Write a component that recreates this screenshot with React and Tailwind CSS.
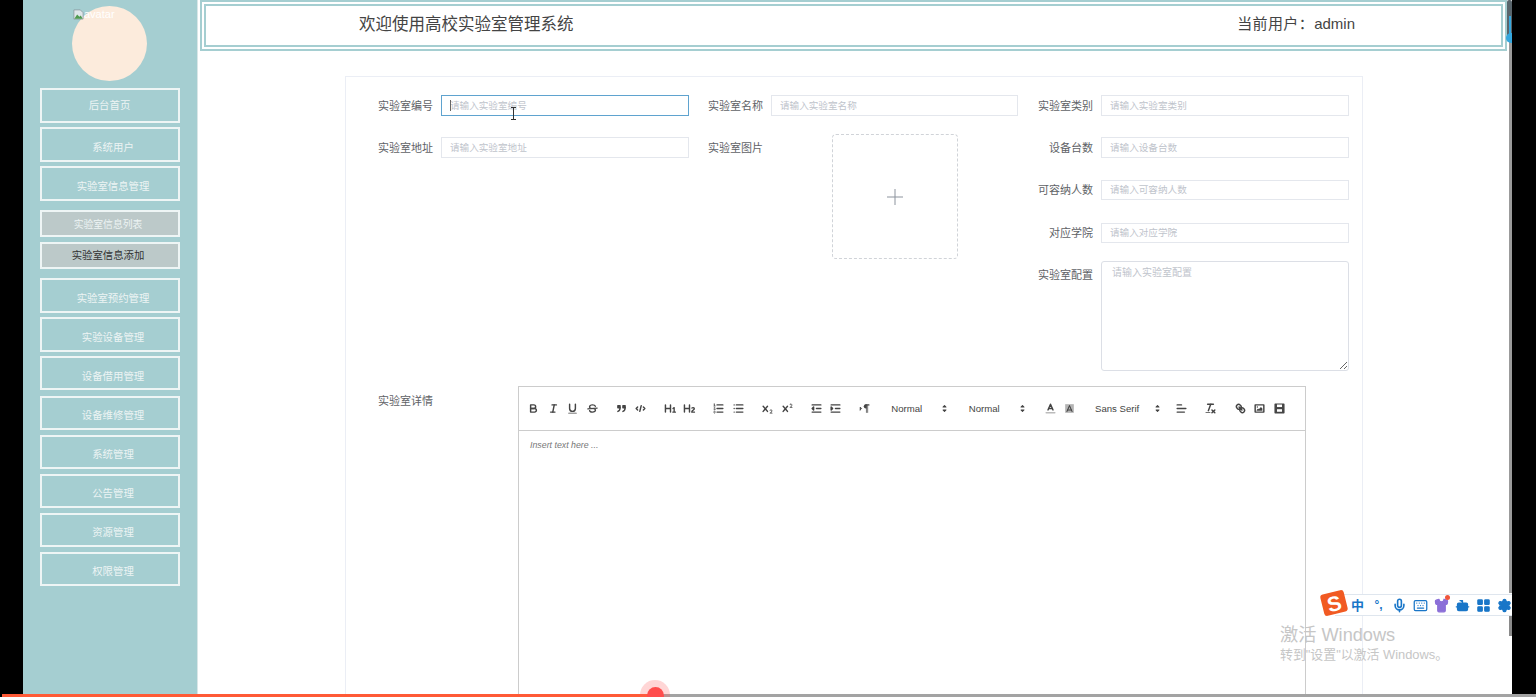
import { Mic, Keyboard, Shirt, Bot, LayoutGrid, Settings } from 'lucide-react'

const NAV_TOP = [
  { label: '后台首页', mt: 'mt-0', box: 'h-[35px]', text: 'pr-[1px] pt-[1px]' },
  { label: '系统用户', mt: 'mt-[4px]', box: 'h-[35px]', text: 'pl-[6px] pt-[7px]' },
  { label: '实验室信息管理', mt: 'mt-[4px]', box: 'h-[35px]', text: 'pl-[6px] pt-[7px]' },
]

const NAV_BOTTOM = [
  { label: '实验室预约管理', mt: 'mt-[9px]', box: 'h-[35px]', text: 'pl-[6px] pt-[7px]' },
  { label: '实验设备管理', mt: 'mt-[4px]', box: 'h-[35px]', text: 'pl-[6px] pt-[7px]' },
  { label: '设备借用管理', mt: 'mt-[4px]', box: 'h-[34px]', text: 'pl-[6px] pt-[7px]' },
  { label: '设备维修管理', mt: 'mt-[6px]', box: 'h-[34px]' },
  { label: '系统管理', mt: 'mt-[5px]', box: 'h-[34px]' },
  { label: '公告管理', mt: 'mt-[5px]', box: 'h-[34px]' },
  { label: '资源管理', mt: 'mt-[5px]', box: 'h-[34px]' },
  { label: '权限管理', mt: 'mt-[5px]', box: 'h-[34px]', text: 'pl-[6px] pt-[6px]' },
]

function NavItem({ label, mt, box, text = 'pl-[6px] pt-[5px]' }) {
  return (
    <div className={`${mt} ${box} w-[140px] border-2 border-[#eef5f5] flex items-center justify-center text-[10.4px] leading-[14px] text-[#edf4f4] ${text}`}>
      {label}
    </div>
  )
}

function Field({ label, placeholder, className = '', h = 'h-[21px]', focused = false }) {
  return (
    <div className={`flex items-center gap-[8px] ${className}`}>
      <label className="w-[55px] shrink-0 text-right text-[11px] leading-[14px] text-[#606266] whitespace-nowrap">{label}</label>
      <div className={`relative flex-1 ${h}`}>
        <input
          placeholder={placeholder}
          className={`block h-full w-full border ${focused ? 'border-[#5fa3cf]' : 'border-[#e4e7ed]'} pl-[8px] pb-[1px] text-[9.6px] leading-[14px] placeholder:text-[#c0c4cc] outline-none`}
        />
        {focused && <div className="absolute left-[9px] top-[5px] h-[11px] w-px bg-[#666]" />}
      </div>
    </div>
  )
}

function Ico({ children }) {
  return (
    <svg viewBox="0 0 18 18" className="w-[13px] h-[13px]" fill="none" stroke="#444" strokeWidth="2" strokeLinecap="round" strokeLinejoin="round">
      {children}
    </svg>
  )
}

function Btn({ children }) {
  return <div className="w-[19.5px] h-[20px] flex items-center justify-center shrink-0"><Ico>{children}</Ico></div>
}

function Picker({ label, w, arrow, pad }) {
  return (
    <div className={`${w} ${pad} h-[20px] flex items-center shrink-0 relative text-[9.6px] leading-[14px] text-[#444]`}>
      {label}
      <svg viewBox="0 0 18 18" className={`absolute ${arrow} top-[3.5px] w-[13px] h-[13px]`} fill="#444" stroke="#444" strokeWidth="1.5" strokeLinejoin="round">
        <polygon points="7 11 9 13 11 11 7 11" />
        <polygon points="7 7 9 5 11 7 7 7" />
      </svg>
    </div>
  )
}

function Toolbar() {
  const fill = { fill: '#444', stroke: 'none' }
  const thin = { strokeWidth: 1 }
  return (
    <div className="h-[44px] border-b border-[#ccc] flex items-center pl-[5px] gap-[9.7px]">
      <div className="flex">
        <Btn>
          <path d="M5,4H9.5A2.5,2.5,0,0,1,12,6.5v0A2.5,2.5,0,0,1,9.5,9H5A0,0,0,0,1,5,9V4A0,0,0,0,1,5,4Z" />
          <path d="M5,9h5.5A2.5,2.5,0,0,1,13,11.5v0A2.5,2.5,0,0,1,10.5,14H5a0,0,0,0,1,0,0V9A0,0,0,0,1,5,9Z" />
        </Btn>
        <Btn>
          <line x1="7" x2="13" y1="4" y2="4" />
          <line x1="5" x2="11" y1="14" y2="14" />
          <line x1="8" x2="10" y1="14" y2="4" />
        </Btn>
        <Btn>
          <path d="M5,3V9a4.012,4.012,0,0,0,4,4H9a4.012,4.012,0,0,0,4-4V3" />
          <rect {...fill} height="1" rx="0.5" ry="0.5" width="12" x="3" y="15" />
        </Btn>
        <Btn>
          <line x1="15.5" x2="2.5" y1="8.5" y2="9.5" strokeWidth="1.5" />
          <path {...fill} d="M9.007,8C6.542,7.791,6,7.519,6,6.5,6,5.792,7.283,5,9,5c1.571,0,2.765.679,2.969,1.309a1,1,0,0,0,1.9-.617C13.356,4.106,11.354,3,9,3,6.2,3,4,4.538,4,6.5a3.2,3.2,0,0,0,.5,1.843Z" />
          <path {...fill} d="M8.984,10C11.457,10.208,12,10.479,12,11.5c0,.708-1.283,1.5-3,1.5-1.571,0-2.765-.679-2.969-1.309a1,1,0,1,0-1.9.617C4.644,13.894,6.646,15,9,15c2.8,0,5-1.538,5-3.5a3.2,3.2,0,0,0-.5-1.843Z" />
        </Btn>
      </div>
      <div className="flex">
        <Btn>
          <rect fill="#444" height="3" width="3" x="4" y="5" />
          <rect fill="#444" height="3" width="3" x="11" y="5" />
          <path d="M7,8c0,4.031-3,5-3,5" />
          <path d="M14,8c0,4.031-3,5-3,5" />
        </Btn>
        <Btn>
          <polyline points="5 7 3 9 5 11" />
          <polyline points="13 7 15 9 13 11" />
          <line x1="10" x2="8" y1="5" y2="13" />
        </Btn>
      </div>
      <div className="flex">
        <Btn>
          <path {...fill} d="M10,4V14a1,1,0,0,1-2,0V10H3v4a1,1,0,0,1-2,0V4A1,1,0,0,1,3,4V8H8V4a1,1,0,0,1,2,0Zm6.06787,9.209H14.98975V7.59863a.54085.54085,0,0,0-.605-.60547h-.62744a1.01119,1.01119,0,0,0-.748.29688L11.645,8.56641a.5435.5435,0,0,0-.022.8584l.28613.30762a.53861.53861,0,0,0,.84717.0332l.09912-.08789a1.2137,1.2137,0,0,0,.2417-.35254h.02246s-.01123.30859-.01123.60547V13.209H12.041a.54085.54085,0,0,0-.605.60547v.43945a.54085.54085,0,0,0,.605.60547h4.02686a.54085.54085,0,0,0,.605-.60547v-.43945A.54085.54085,0,0,0,16.06787,13.209Z" />
        </Btn>
        <Btn>
          <path {...fill} d="M16.73975,13.81445v.43945a.54085.54085,0,0,1-.605.60547H11.855a.58392.58392,0,0,1-.64893-.60547V14.0127c0-2.90527,3.39941-3.42187,3.39941-4.55469a.77675.77675,0,0,0-.84717-.78125,1.17684,1.17684,0,0,0-.83594.38477c-.2749.26367-.561.374-.85791.13184l-.4292-.34082c-.30811-.24219-.38525-.51758-.1543-.81445a2.97155,2.97155,0,0,1,2.45361-1.17676,2.45393,2.45393,0,0,1,2.68408,2.40918c0,2.45312-3.1792,2.92676-3.27832,3.93848h2.79443A.54085.54085,0,0,1,16.73975,13.81445ZM9,3A.99974.99974,0,0,0,8,4V8H3V4A1,1,0,0,0,1,4V14a1,1,0,0,0,2,0V10H8v4a1,1,0,0,0,2,0V4A.99974.99974,0,0,0,9,3Z" />
        </Btn>
      </div>
      <div className="flex">
        <Btn>
          <line x1="7" x2="15" y1="4" y2="4" />
          <line x1="7" x2="15" y1="9" y2="9" />
          <line x1="7" x2="15" y1="14" y2="14" />
          <line {...thin} x1="2.5" x2="4.5" y1="5.5" y2="5.5" />
          <path {...fill} d="M3.5,6A0.5,0.5,0,0,1,3,5.5V3.085l-0.276.138A0.5,0.5,0,0,1,2.053,3c-0.124-.247-0.023-0.324.224-0.447l1-.5A0.5,0.5,0,0,1,4,2.5v3A0.5,0.5,0,0,1,3.5,6Z" />
          <path {...thin} d="M4.5,10.5h-2c0-.234,1.85-1.076,1.85-2.234A0.959,0.959,0,0,0,2.5,8.156" />
          <path {...thin} d="M2.5,14.846a0.959,0.959,0,0,0,1.85-.109A0.7,0.7,0,0,0,3.75,14a0.688,0.688,0,0,0,.6-0.736,0.959,0.959,0,0,0-1.85-.109" />
        </Btn>
        <Btn>
          <line x1="6" x2="15" y1="4" y2="4" />
          <line x1="6" x2="15" y1="9" y2="9" />
          <line x1="6" x2="15" y1="14" y2="14" />
          <line x1="3" x2="3" y1="4" y2="4" />
          <line x1="3" x2="3" y1="9" y2="9" />
          <line x1="3" x2="3" y1="14" y2="14" />
        </Btn>
      </div>
      <div className="flex">
        <Btn>
          <path {...fill} d="M15.5,15H13.861a3.858,3.858,0,0,0,1.914-2.975,1.8,1.8,0,0,0-1.6-1.751A1.921,1.921,0,0,0,12.021,11.7a0.50013,0.50013,0,1,0,.957.291h0a0.914,0.914,0,0,1,1.053-.725,0.81,0.81,0,0,1,.744.762c0,1.076-1.16971,1.86982-1.93971,2.43082A1.45639,1.45639,0,0,0,12,15.5a0.5,0.5,0,0,0,.5.5h3A0.5,0.5,0,0,0,15.5,15Z" />
          <path {...fill} d="M9.65,5.241a1,1,0,0,0-1.409.108L6,7.964,3.759,5.349A1,1,0,0,0,2.241,6.651L4.684,9.5,2.241,12.35A1,1,0,1,0,3.759,13.65L6,11.036,8.241,13.65a1,1,0,1,0,1.519-1.3L7.316,9.5,9.759,6.651A1,1,0,0,0,9.65,5.241Z" />
        </Btn>
        <Btn>
          <path {...fill} d="M15.5,7H13.861a4.015,4.015,0,0,0,1.914-2.975,1.8,1.8,0,0,0-1.6-1.751A1.922,1.922,0,0,0,12.021,3.7a0.5,0.5,0,1,0,.957.291,0.917,0.917,0,0,1,1.053-.725,0.81,0.81,0,0,1,.744.762c0,1.077-1.164,1.925-1.934,2.486A1.423,1.423,0,0,0,12,7.5a0.5,0.5,0,0,0,.5.5h3A0.5,0.5,0,0,0,15.5,7Z" />
          <path {...fill} d="M9.651,5.241a1,1,0,0,0-1.41.108L6,7.964,3.759,5.349A1,1,0,1,0,2.241,6.651L4.684,9.5,2.241,12.35A1,1,0,1,0,3.759,13.65L6,11.036,8.241,13.65a1,1,0,0,0,1.519-1.3L7.316,9.5,9.759,6.651A1,1,0,0,0,9.651,5.241Z" />
        </Btn>
      </div>
      <div className="flex">
        <Btn>
          <line x1="3" x2="15" y1="14" y2="14" />
          <line x1="3" x2="15" y1="4" y2="4" />
          <line x1="9" x2="15" y1="9" y2="9" />
          <polyline fill="#444" points="5 7 5 11 3 9 5 7" />
        </Btn>
        <Btn>
          <line x1="3" x2="15" y1="14" y2="14" />
          <line x1="3" x2="15" y1="4" y2="4" />
          <line x1="9" x2="15" y1="9" y2="9" />
          <polyline fill="#444" points="3 7 3 11 5 9 3 7" />
        </Btn>
      </div>
      <div className="flex">
        <Btn>
          <polygon fill="#444" strokeWidth="1" points="3 11 5 9 3 7 3 11" />
          <line x1="15" x2="11" y1="4" y2="4" />
          <path {...fill} d="M11,3a3,3,0,0,0,0,6h1V3H11Z" />
          <rect {...fill} height="11" width="1" x="11" y="4" />
          <rect {...fill} height="11" width="1" x="13" y="4" />
        </Btn>
      </div>
      <div className="flex">
        <Picker label="Normal" w="w-[78px]" pad="pl-[7px]" arrow="right-[11.5px]" />
        <Picker label="Normal" w="w-[78px]" pad="pl-[6.5px]" arrow="right-[11.5px]" />
        <Btn>
          <line stroke="#bbb" x1="3" x2="15" y1="15" y2="15" />
          <polyline points="5.5 11 9 3 12.5 11" />
          <line x1="11.63" x2="6.38" y1="9" y2="9" />
        </Btn>
        <Btn>
          <rect fill="#444" stroke="none" opacity="0.4" x="3" y="3" width="12" height="12" />
          <polyline strokeWidth="1.5" points="5.5 13 9 5 12.5 13" />
          <line strokeWidth="1.5" x1="11.63" x2="6.38" y1="11" y2="11" />
        </Btn>
      </div>
      <div className="flex">
        <Picker label="Sans Serif" w="w-[83px]" pad="pl-[6px]" arrow="right-[8.5px]" />
        <Btn>
          <line x1="3" x2="15" y1="9" y2="9" />
          <line x1="3" x2="13" y1="14" y2="14" />
          <line x1="3" x2="9" y1="4" y2="4" />
        </Btn>
      </div>
      <div className="flex">
        <Btn>
          <line x1="5" x2="13" y1="3" y2="3" />
          <line x1="6" x2="9.35" y1="12" y2="3" />
          <line x1="11" x2="15" y1="11" y2="15" />
          <line x1="15" x2="11" y1="11" y2="15" />
          <rect {...fill} height="1" rx="0.5" ry="0.5" width="7" x="2" y="14" />
        </Btn>
      </div>
      <div className="flex">
        <Btn>
          <line x1="7" x2="11" y1="7" y2="11" />
          <path d="M8.9,4.577a3.476,3.476,0,0,1,.36,4.679A3.476,3.476,0,0,1,4.577,8.9C3.185,7.5,2.035,6.4,4.217,4.217S7.5,3.185,8.9,4.577Z" />
          <path d="M13.423,9.1a3.476,3.476,0,0,0-4.679-.36,3.476,3.476,0,0,0,.36,4.679c1.392,1.392,2.5,2.542,4.679.36S14.815,10.5,13.423,9.1Z" />
        </Btn>
        <Btn>
          <rect height="10" width="12" x="3" y="4" />
          <circle {...fill} cx="6" cy="7" r="1" />
          <polyline {...fill} points="5 12 5 11 7 9 8 10 11 7 13 9 13 12 5 12" />
        </Btn>
        <Btn>
          <rect fill="#444" height="12" width="12" x="3" y="3" />
          <rect fill="#fff" stroke="none" height="3.5" width="7" x="5.5" y="3.5" />
          <rect fill="#fff" stroke="none" height="3.5" width="7" x="5.5" y="10" />
        </Btn>
      </div>
    </div>
  )
}

export default function App() {
  return (
    <div className="relative h-[697px] w-[1536px] overflow-hidden bg-black pl-[23px] pr-[24px] flex font-['Liberation_Sans','Noto_Sans_CJK_SC',sans-serif]">
      {/* sidebar */}
      <aside className="w-[175px] shrink-0 bg-[#a5ced1] border-r border-[#d9e6e7] pl-[17px] pt-[6px]">
        <div className="relative w-[75px] h-[75px] ml-[32px] mb-[7px] rounded-full bg-[#fcebdc]">
          <div className="absolute left-[1px] top-[3px] flex items-center text-[11px] leading-none text-white">
            <svg viewBox="0 0 12 12" className="w-[11px] h-[11px] shrink-0">
              <path d="M1 1h7l3 3v7H1z" fill="#dfe6ea" stroke="#8a959c" strokeWidth="0.8" />
              <path d="M1.5 10.5 L4.5 6 L7 8.5 L8.5 7 L10.5 10.5 Z" fill="#4f9a4f" />
            </svg>
            avatar
          </div>
        </div>
        {NAV_TOP.map(item => <NavItem key={item.label} {...item} />)}
        <div className="mt-[9px] h-[27px] w-[140px] border-2 border-[#eef5f5] bg-[#bcc9c9] flex items-center justify-center pr-[4px] pt-[3px] text-[9.8px] leading-[14px] text-[#edf4f4]">实验室信息列表</div>
        <div className="mt-[5px] h-[27px] w-[140px] border-2 border-[#eef5f5] bg-[#bcc9c9] flex items-center justify-center pr-[4px] text-[10.4px] leading-[14px] text-[#333]">实验室信息添加</div>
        {NAV_BOTTOM.map(item => <NavItem key={item.label} {...item} />)}
      </aside>

      {/* main */}
      <main className="flex-1 min-w-0 bg-white">
        <header className="ml-[2px] mr-[5px] h-[51px] border-[6px] border-double border-[#a5ced1] flex items-center justify-between pl-[153px] pr-[146px] pb-[2px]">
          <span className="text-[16.5px] text-[#444]">欢迎使用高校实验室管理系统</span>
          <span className="text-[15px] text-[#444]"><span className="tracking-[0.4px]">当前用户：</span>admin</span>
        </header>

        <section className="ml-[147px] mt-[25px] w-[1018px] h-[700px] border border-[#ebeef5] pl-[32px] pt-[18px]">
          <div className="flex gap-[19px]">
            <div className="w-[311px]">
              <Field label="实验室编号" placeholder="请输入实验室编号" focused />
              <Field label="实验室地址" placeholder="请输入实验室地址" className="mt-[21px]" />
            </div>
            <div className="w-[311px] pr-[1px]">
              <Field label="实验室名称" placeholder="请输入实验室名称" />
              <div className="mt-[18px] flex">
                <label className="w-[55px] pt-[7px] text-right text-[11px] leading-[14px] text-[#606266] whitespace-nowrap">实验室图片</label>
                <div className="ml-[69px] w-[126px] h-[125px] rounded-[4px] border border-dashed border-[#d0d3d8] flex items-center justify-center">
                  <svg viewBox="0 0 18 18" className="w-[18px] h-[18px]" stroke="#8c939d" strokeWidth="1">
                    <line x1="1" x2="17" y1="9" y2="9" />
                    <line x1="9" x2="9" y1="1" y2="17" />
                  </svg>
                </div>
              </div>
            </div>
            <div className="w-[311px]">
              <Field label="实验室类别" placeholder="请输入实验室类别" />
              <Field label="设备台数" placeholder="请输入设备台数" className="mt-[21px]" />
              <Field label="可容纳人数" placeholder="请输入可容纳人数" className="mt-[22px]" h="h-[20px]" />
              <Field label="对应学院" placeholder="请输入对应学院" className="mt-[23px]" h="h-[20px]" />
              <div className="mt-[18px] flex gap-[8px]">
                <label className="w-[55px] shrink-0 pt-[7px] text-right text-[11px] leading-[14px] text-[#606266] whitespace-nowrap">实验室配置</label>
                <textarea
                  placeholder="请输入实验室配置"
                  className="block flex-1 h-[110px] rounded-[3px] border border-[#dcdfe6] px-[10px] py-[4px] text-[10px] leading-[14px] placeholder:text-[#c0c4cc] outline-none resize-y"
                />
              </div>
            </div>
          </div>

          <div className="mt-[15px] flex">
            <label className="w-[55px] shrink-0 pt-[8px] text-right text-[11px] leading-[14px] text-[#606266] whitespace-nowrap">实验室详情</label>
            <div className="ml-[85px] w-[788px] h-[400px] border border-[#ccc]">
              <Toolbar />
              <p className="pl-[11px] pt-[7px] text-[8.8px] leading-[14px] italic text-[#777]">Insert text here ...</p>
            </div>
          </div>
        </section>
      </main>

      {/* recorder + desktop overlays */}
      <div className="absolute left-[1509px] top-[38px] h-[555px] w-[3px] bg-[#9b9b9b]" />
      <div className="absolute left-[1509px] top-[615px] h-[21px] w-[3px] bg-[#8a8a8a]" />
      <div className="absolute left-[1507px] top-0 h-[35px] w-[5px] rounded-t-[2px] bg-[#59656c]" />
      <div className="absolute left-[1509px] top-[16px] h-[20px] w-[2px] bg-[#35a7de]" />
      <div className="absolute left-[1506px] top-[33px] h-[10px] w-[6px] rounded-l-full bg-[#35a7de]" />
      <div className="absolute left-[513px] top-[107px] h-[12px] w-px bg-[#333]" />
      <div className="absolute left-[511px] top-[107px] h-px w-[5px] bg-[#333]" />
      <div className="absolute left-[511px] top-[119px] h-px w-[5px] bg-[#333]" />

      <div className="absolute left-[1335px] top-[594px] h-[22px] w-[177px] overflow-hidden border-y border-[#dfe6ee] bg-white flex items-center pl-[15px] gap-[6px] text-[#1976c8]">
        <span className="w-[15px] shrink-0 text-center text-[13px] font-bold leading-none">中</span>
        <span className="w-[15px] shrink-0 text-center text-[12px] font-bold leading-none">°,</span>
        <Mic className="w-[15px] h-[15px] shrink-0" strokeWidth={2.6} />
        <Keyboard className="w-[15px] h-[15px] shrink-0" strokeWidth={2} />
        <Shirt className="w-[15px] h-[15px] shrink-0 text-[#8b6fd8] fill-[#8b6fd8]" strokeWidth={2} />
        <Bot className="w-[15px] h-[15px] shrink-0 fill-[#1976c8]" strokeWidth={2} />
        <LayoutGrid className="w-[15px] h-[15px] shrink-0 fill-[#1976c8]" strokeWidth={2} />
        <Settings className="w-[15px] h-[15px] shrink-0 fill-[#1976c8]" strokeWidth={2} />
      </div>
      <div className="absolute left-[1445px] top-[595px] h-[5px] w-[5px] rounded-full bg-[#f0553a]" />
      <div className="absolute left-[1322px] top-[592px] h-[22px] w-[24px] -rotate-[14deg] rounded-[3px] bg-[#f15a22] flex items-center justify-center text-[21px] font-black leading-none text-white">S</div>

      <div className="absolute left-[1280px] top-[623px] text-[18.2px] leading-[24px] text-[#c6c6c6]">激活 Windows</div>
      <div className="absolute left-[1280px] top-[647px] text-[12.9px] leading-[16px] text-[#c6c6c6] whitespace-nowrap">转到"设置"以激活 Windows。</div>

      <div className="absolute left-[2px] right-0 bottom-0 h-[3px] bg-[#a3a3a3]">
        <div className="h-full w-[646px] bg-[#ff5a36]" />
      </div>
      <div className="absolute left-[640px] top-[680px] h-[30px] w-[30px] rounded-full bg-[#ff5a5a]/25" />
      <div className="absolute left-[647px] top-[687px] h-[17px] w-[17px] rounded-full bg-[#ff4d4d]" />
    </div>
  )
}
